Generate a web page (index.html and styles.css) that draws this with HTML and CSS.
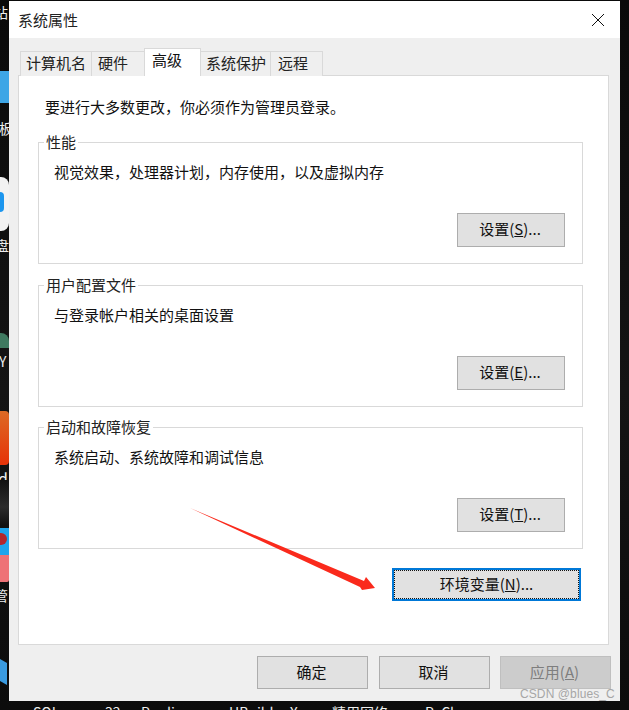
FILE: index.html
```html
<!DOCTYPE html>
<html lang="zh-CN">
<head>
    <meta charset="UTF-8">
    <title>系统属性</title>
    <link rel="stylesheet" href="styles.css">
</head>
<body>

    <!-- Desktop behind the dialog -->
    <div class="desktop">
        <span class="desk-label label-top">站</span>
        <div class="desk-icon icon-blue"></div>
        <span class="desk-label label-ban">板</span>
        <div class="desk-icon icon-disc"><div class="disc-dot"></div></div>
        <span class="desk-label label-pan">盘</span>
        <div class="desk-icon icon-green"></div>
        <span class="desk-label label-y">Y</span>
        <div class="desk-icon icon-orange"></div>
        <span class="desk-label label-d">d</span>
        <div class="desk-icon icon-streak"></div>
        <div class="desk-icon icon-qq"><div class="qq-badge"></div></div>
        <div class="desk-icon icon-pink"></div>
        <span class="desk-label label-guan">管</span>
        <div class="desk-icon icon-monitor"></div>

        <div class="task-labels">
            <span class="task-sql">SQL</span>
            <span class="task-32">32</span>
            <span class="task-pardiso">Pardiso</span>
            <span class="task-hb">HBuilder X</span>
            <span class="task-net">精用网络</span>
            <span class="task-py">PyCh</span>
        </div>
    </div>

    <!-- Dialog -->
    <div class="window">
        <div class="title-bar">
            <span class="title-text">系统属性</span>
            <svg class="close-icon" width="14" height="14" viewBox="0 0 14 14">
                <path d="M1 1L13 13M13 1L1 13" stroke="#111" stroke-width="1" fill="none"/>
            </svg>
        </div>

        <div class="window-body">
            <div class="tabs">
                <div class="tab tab-name">计算机名</div>
                <div class="tab tab-hw">硬件</div>
                <div class="tab tab-active">高级</div>
                <div class="tab tab-protect">系统保护</div>
                <div class="tab tab-remote">远程</div>
            </div>

            <div class="panel">
                <p class="admin-note">要进行大多数更改，你必须作为管理员登录。</p>

                <div class="group">
                    <span class="group-title">性能</span>
                    <p class="group-text">视觉效果，处理器计划，内存使用，以及虚拟内存</p>
                    <button class="btn btn-group">设置(<u>S</u>)...</button>
                </div>

                <div class="group">
                    <span class="group-title">用户配置文件</span>
                    <p class="group-text">与登录帐户相关的桌面设置</p>
                    <button class="btn btn-group">设置(<u>E</u>)...</button>
                </div>

                <div class="group group-last">
                    <span class="group-title">启动和故障恢复</span>
                    <p class="group-text">系统启动、系统故障和调试信息</p>
                    <button class="btn btn-group">设置(<u>T</u>)...</button>
                </div>

                <div class="env-row">
                    <button class="btn btn-env"><span class="focus-ring">环境变量(<u>N</u>)...</span></button>
                </div>
            </div>

            <div class="footer">
                <button class="btn btn-footer btn-ok">确定</button>
                <button class="btn btn-footer">取消</button>
                <button class="btn btn-footer btn-disabled">应用(<u>A</u>)</button>
            </div>
        </div>
    </div>

    <!-- Red annotation arrow -->
    <svg class="arrow" width="629" height="710" viewBox="0 0 629 710">
        <path d="M190 508L364 581L366 577L375 588L362 590L360 587Z" fill="#fa2a1c"/>
    </svg>

    <span class="watermark">CSDN @blues_C</span>

</body>
</html>
```

FILE: styles.css
```css
/* Global Styles */
* {
    box-sizing: border-box;
}

body {
    margin: 0;
    width: 629px;
    height: 710px;
    position: relative;
    overflow: hidden;
    background: linear-gradient(to bottom, #0a0a0a, #141414 55%, #0c0c0c);
    font-family: 'Noto Sans CJK SC', 'Noto Sans', sans-serif;
    font-size: 15px;
    color: #111;
}

/* Desktop */
.desktop {
    position: absolute;
    top: 0;
    left: 0;
    width: 629px;
    height: 710px;
}

.desk-label {
    position: absolute;
    left: -6px;
    font-size: 14px;
    line-height: 16px;
    color: #eee;
}

.label-top { top: 4px; }
.label-ban { top: 120px; left: -1px; }
.label-pan { top: 237px; left: -5px; }
.label-y { top: 353px; left: -1px; }
.label-d { top: 470px; left: -2px; font-size: 16px; }
.label-guan { top: 587px; left: -6px; }

.desk-icon {
    position: absolute;
    left: 0;
    width: 9px;
}

.icon-blue {
    top: 71px;
    height: 32px;
    background: #3ea6e6;
}

.icon-disc {
    top: 177px;
    height: 54px;
    background: #f2f2f2;
    border-radius: 0 8px 8px 0;
}

.disc-dot {
    width: 4px;
    height: 20px;
    margin-top: 15px;
    background: #1c96ee;
    border-radius: 0 8px 8px 0;
}

.icon-green {
    top: 333px;
    height: 15px;
    background: #3f7a60;
    border-radius: 0 8px 0 0;
}

.icon-orange {
    top: 411px;
    height: 54px;
    background: linear-gradient(to bottom, #dd6a24, #e63208);
    border-radius: 0 4px 4px 0;
}

.icon-streak {
    top: 480px;
    height: 45px;
    background: linear-gradient(to bottom, #111, #2c2c2c 60%, #111);
}

.icon-qq {
    top: 528px;
    height: 27px;
    background: #1fa5ec;
}

.qq-badge {
    width: 7px;
    height: 12px;
    margin-top: 5px;
    background: #b5272c;
    border-radius: 0 6px 6px 0;
}

.icon-pink {
    top: 555px;
    height: 27px;
    background: #ee7276;
    border-radius: 0 0 2px 0;
}

.icon-monitor {
    top: 659px;
    width: 7px;
    height: 26px;
    background: #3a9be0;
    clip-path: polygon(0 0, 100% 4px, 100% 100%, 0 22px);
}

.task-labels {
    position: absolute;
    top: 702px;
    left: 0;
    width: 629px;
    height: 8px;
    overflow: hidden;
    font-size: 14px;
    line-height: 20px;
    color: #eee;
}

.task-labels span {
    position: absolute;
    top: 0;
    white-space: nowrap;
}

.task-sql { left: 33px; }
.task-32 { left: 105px; }
.task-pardiso { left: 141px; }
.task-hb { left: 229px; }
.task-net { left: 332px; }
.task-py { left: 425px; }

/* Window */
.window {
    position: absolute;
    top: 1px;
    left: 9px;
    width: 611px;
    height: 700px;
    background-color: #efefef;
    display: flex;
    flex-direction: column;
}

.title-bar {
    height: 37px;
    background-color: #fff;
    display: flex;
    justify-content: space-between;
    align-items: center;
    padding: 0 15px 0 9px;
}

.title-text {
    line-height: 37px;
    color: #222;
}

.window-body {
    flex: 1;
    padding: 11px 11px 0 9px;
    display: flex;
    flex-direction: column;
}

/* Tabs */
.tabs {
    display: flex;
    align-items: flex-end;
    height: 27px;
    padding-left: 2px;
    margin-bottom: -1px;
    position: relative;
    z-index: 1;
}

.tab {
    height: 25px;
    border: 1px solid #d9d9d9;
    border-bottom: none;
    border-right: none;
    background-color: #efefef;
    line-height: 21px;
    padding-left: 6px;
    color: #222;
}

.tab-name { width: 71px; padding-left: 5px; }
.tab-hw { width: 53px; }
.tab-protect { width: 70px; padding-left: 5px; }

.tab-remote {
    width: 53px;
    padding-left: 7px;
    border-right: 1px solid #d9d9d9;
}

.tab-active {
    width: 57px;
    height: 28px;
    background-color: #fff;
    border-right: 1px solid #d9d9d9;
    line-height: 21px;
    color: #111;
    padding-left: 7px;
    margin-right: -1px;
}

.panel {
    height: 570px;
    width: 591px;
    background-color: #fff;
    border: 1px solid #d9d9d9;
    padding: 0 25px 0 19px;
}

.admin-note {
    margin: 0;
    height: 66px;
    padding: 18px 0 0 7px;
    line-height: 26px;
}

/* Groups */
.group {
    position: relative;
    height: 122px;
    margin-bottom: 21px;
    border: 1px solid #d9d9d9;
    display: flex;
    flex-direction: column;
    align-items: flex-end;
    justify-content: space-between;
    padding: 16px 17px 16px 15px;
}

.group-last {
    margin-top: -1px;
    margin-bottom: 0;
}

.group-title {
    position: absolute;
    top: -12px;
    left: 5px;
    padding: 0 2px;
    background-color: #fff;
    line-height: 22px;
    color: #222;
}

.group-text {
    margin: 0;
    align-self: flex-start;
    line-height: 26px;
}

/* Buttons */
.btn {
    padding: 0 2px 3px 0;
    font-family: inherit;
    font-size: 15px;
    color: #111;
    background-color: #e1e1e1;
    border: 1px solid #adadad;
    cursor: pointer;
}

.btn-group {
    width: 108px;
    height: 34px;
}

.env-row {
    display: flex;
    justify-content: flex-end;
    padding: 19px 0 0 0;
    margin-right: 2px;
}

.btn-env {
    width: 189px;
    height: 33px;
    padding: 0;
    border: 2px solid #0078d7;
}

.focus-ring {
    display: block;
    height: 29px;
    line-height: 25px;
    border: 1px dotted #111;
}

.footer {
    display: flex;
    justify-content: flex-end;
    gap: 10px;
    margin-top: 11px;
    margin-right: -2px;
}

.btn-footer {
    width: 111px;
    height: 33px;
}

.btn-ok {
    margin-right: 1px;
}

.btn-disabled {
    background-color: #cccccc;
    border-color: #bfbfbf;
    color: #7e7e7e;
}

.close-icon {
    display: block;
}

/* Annotations */
.arrow {
    position: absolute;
    top: 0;
    left: 0;
    pointer-events: none;
}

.watermark {
    position: absolute;
    top: 687px;
    left: 520px;
    font-family: 'Liberation Sans', sans-serif;
    font-size: 12px;
    letter-spacing: 0.1px;
    line-height: 15px;
    color: #9a9a9a;
    white-space: nowrap;
    opacity: 0.85;
}
```
